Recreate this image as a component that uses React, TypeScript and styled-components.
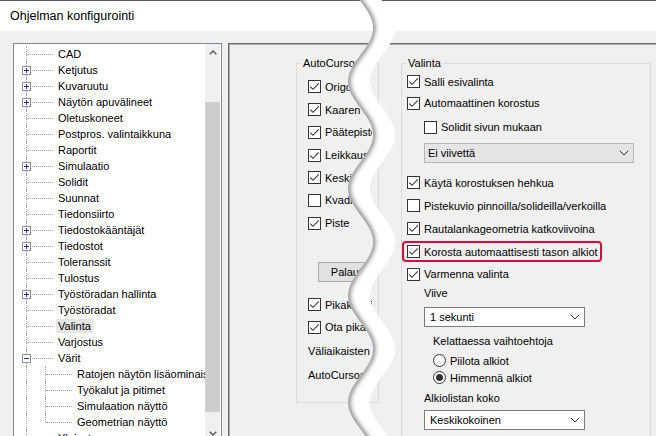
import React from 'react'
import styled, { createGlobalStyle } from 'styled-components'

const GlobalStyle = createGlobalStyle`
    html, body {
        margin: 0;
        padding: 0;
        background: #f0f0f0;
    }
    body {
        font-family: "Liberation Sans", Arial, sans-serif;
        font-size: 11px;
        color: #000;
    }
`

const Window = styled.div`
    position: relative;
    width: 656px;
    height: 436px;
    overflow: hidden;
    background: #f0f0f0;
`

const TitleBar = styled.div`
    height: 30px;
    border-top: 1px solid #5a5a5a;
    background: #fff;
    display: flex;
    align-items: center;
    padding-left: 10px;
    font-size: 12.5px;
`

const Body = styled.div`
    display: flex;
    align-items: flex-start;
    gap: 6px;
    padding: 12px 0 0 13px;
`

const TreeBox = styled.div`
    flex: none;
    width: 209px;
    height: 400px;
    box-sizing: border-box;
    border: 1px solid #828790;
    background: #fff;
    display: flex;
    padding-right: 1px;
`

const TreeList = styled.div`
    flex: 1;
    overflow: hidden;
    padding: 2px 0 0 12px;
`

const Row = styled.div`
    display: flex;
    align-items: center;
    height: 16px;
    white-space: nowrap;
`

const Guide = styled.span`
    flex: none;
    width: 19px;
    align-self: stretch;
    box-sizing: border-box;
    border-left: 1px dotted #a0a0a0;
`

const Branch = styled.span<{ $last?: boolean }>`
    position: relative;
    flex: none;
    width: 32px;
    align-self: stretch;
    &::before {
        content: '';
        position: absolute;
        left: 0;
        top: 0;
        height: ${p => (p.$last ? '8px' : '100%')};
        border-left: 1px dotted #a0a0a0;
    }
    &::after {
        content: '';
        position: absolute;
        left: 1px;
        top: 8px;
        width: 26px;
        border-top: 1px dotted #a0a0a0;
    }
`

const Expander = styled.span`
    position: absolute;
    z-index: 1;
    left: -4px;
    top: 4px;
    width: 9px;
    height: 9px;
    box-sizing: border-box;
    border: 1px solid #919191;
    background: #fff;
    display: flex;
`

const NodeLabel = styled.span<{ $selected?: boolean }>`
    padding: 0 2px;
    margin-left: -2px;
    line-height: 14px;
    background: ${p => (p.$selected ? '#e6e6e6' : 'transparent')};
`

const Scrollbar = styled.div`
    flex: none;
    width: 15px;
    background: #f0f0f0;
    display: flex;
    flex-direction: column;
`

const ScrollArrow = styled.div`
    height: 17px;
    display: flex;
    align-items: center;
    justify-content: center;
`

const ScrollTrack = styled.div`
    flex: 1;
`

const Thumb = styled.div`
    margin-top: 41px;
    height: 310px;
    background: #cdcdcd;
`

const Panel = styled.div`
    flex: none;
    width: 440px;
    height: 400px;
    box-sizing: border-box;
    border: 1px solid #6e6e6e;
    box-shadow: inset 1px 1px 0 #a8a8a8;
    display: flex;
    align-items: flex-start;
    gap: 22px;
    padding: 19px 0 0 67px;
`

const Group = styled.div<{ $width: number }>`
    flex: none;
    width: ${p => p.$width}px;
    box-sizing: border-box;
    border: 1px solid #dcdcdc;
`

const GroupTitle = styled.div`
    width: fit-content;
    margin: -8px 0 0 4px;
    padding: 0 2px;
    line-height: 14px;
    background: #f0f0f0;
`

const GroupBody = styled.div<{ $pad: string; $clip?: number }>`
    overflow: hidden;
    padding: ${p => p.$pad};
    margin-right: ${p => p.$clip ?? 0}px;
    display: flex;
    flex-direction: column;
    white-space: nowrap;
`

const CheckRow = styled.div<{ $h?: number; $indent?: number; $mt?: number }>`
    flex: none;
    display: flex;
    align-items: center;
    gap: 4px;
    height: ${p => p.$h ?? 23}px;
    padding-left: ${p => p.$indent ?? 0}px;
    margin-top: ${p => p.$mt ?? 0}px;
`

const Highlight = styled.div`
    flex: none;
    display: flex;
    align-items: center;
    gap: 4px;
    width: fit-content;
    height: 21px;
    box-sizing: border-box;
    margin: 1px 0 1px -5px;
    padding: 0 2px 0 3px;
    border: 2px solid #d0103a;
    border-radius: 4px;
`

const Box = styled.span`
    flex: none;
    width: 13px;
    height: 13px;
    box-sizing: border-box;
    border: 1px solid #333;
    background: #fff;
    display: flex;
    align-items: center;
    justify-content: center;
`

const RadioCircle = styled.span`
    flex: none;
    width: 13px;
    height: 13px;
    box-sizing: border-box;
    border: 1px solid #333;
    border-radius: 50%;
    background: #fff;
    display: flex;
    align-items: center;
    justify-content: center;
`

const RadioDot = styled.span`
    width: 7px;
    height: 7px;
    border-radius: 50%;
    background: #333;
`

const TextRow = styled.div<{ $h?: number; $indent?: number; $mt?: number }>`
    flex: none;
    display: flex;
    align-items: center;
    height: ${p => p.$h ?? 16}px;
    padding-left: ${p => p.$indent ?? 0}px;
    margin-top: ${p => p.$mt ?? 0}px;
`

const Select = styled.div<{ $width: number; $disabled?: boolean; $mt?: number }>`
    flex: none;
    width: ${p => p.$width}px;
    height: 20px;
    box-sizing: border-box;
    margin: ${p => p.$mt ?? 0}px 0 0 17px;
    border: 1px solid ${p => (p.$disabled ? '#b5b5b5' : '#7a7a7a')};
    background: ${p => (p.$disabled ? '#e5e5e5' : '#fff')};
    display: flex;
    align-items: center;
    justify-content: space-between;
    padding: 0 4px 0 ${p => (p.$disabled ? 3 : 5)}px;
`

const Button = styled.div`
    flex: none;
    width: 110px;
    height: 20px;
    box-sizing: border-box;
    margin: 28px 0 0 10px;
    border: 1px solid #adadad;
    background: #e1e1e1;
    display: flex;
    align-items: center;
    justify-content: center;
`

const WaveLayer = styled.svg`
    position: absolute;
    left: 0;
    top: 0;
    pointer-events: none;
    z-index: 5;
`

const Check = ({ checked }: { checked: boolean }) => (
    <Box>
        {checked && (
            <svg width="11" height="11" viewBox="0 0 11 11">
                <path d="M1.3 5.6 L4 8.3 L9.8 2.4" fill="none" stroke="#333" strokeWidth="1.1" />
            </svg>
        )}
    </Box>
)

const Radio = ({ checked }: { checked: boolean }) => (
    <RadioCircle>{checked && <RadioDot />}</RadioCircle>
)

const Chevron = () => (
    <svg width="10" height="6" viewBox="0 0 10 6">
        <polyline points="0.8,0.8 5,5 9.2,0.8" fill="none" stroke="#333" strokeWidth="1" />
    </svg>
)

const ExpandIcon = ({ open }: { open: boolean }) => (
    <svg width="7" height="7" viewBox="0 0 7 7">
        <line x1="1" y1="3.5" x2="6" y2="3.5" stroke="#1e3f8f" strokeWidth="1" />
        {!open && <line x1="3.5" y1="1" x2="3.5" y2="6" stroke="#1e3f8f" strokeWidth="1" />}
    </svg>
)

type Node = { label: string; exp?: '+' | '-'; level?: number; last?: boolean; selected?: boolean }

const tree: Node[] = [
    { label: 'CAD' },
    { label: 'Ketjutus', exp: '+' },
    { label: 'Kuvaruutu', exp: '+' },
    { label: 'Näytön apuvälineet', exp: '+' },
    { label: 'Oletuskoneet' },
    { label: 'Postpros. valintaikkuna' },
    { label: 'Raportit' },
    { label: 'Simulaatio', exp: '+' },
    { label: 'Solidit' },
    { label: 'Suunnat' },
    { label: 'Tiedonsiirto' },
    { label: 'Tiedostokääntäjät', exp: '+' },
    { label: 'Tiedostot', exp: '+' },
    { label: 'Toleranssit' },
    { label: 'Tulostus' },
    { label: 'Työstöradan hallinta', exp: '+' },
    { label: 'Työstöradat' },
    { label: 'Valinta', selected: true },
    { label: 'Varjostus' },
    { label: 'Värit', exp: '-' },
    { label: 'Ratojen näytön lisäominaisuudet', level: 2 },
    { label: 'Työkalut ja pitimet', level: 2 },
    { label: 'Simulaation näyttö', level: 2 },
    { label: 'Geometrian näyttö', level: 2, last: true },
    { label: 'Yleiset' },
]

const autoCursor: [string, boolean][] = [
    ['Origo', true],
    ['Kaaren keskipiste', true],
    ['Päätepiste', true],
    ['Leikkauspiste', true],
    ['Keskinen', true],
    ['Kvadr.', false],
    ['Piste', true],
]

// torn-paper strip drawn over the middle of the dialog
const waveX = (y: number) => 360.5 + 12.5 * Math.cos((2 * Math.PI * (y - 28)) / 107)

const Wave = () => {
    const ys: number[] = []
    for (let y = -6; y <= 444; y += 2) ys.push(y)
    const left = ys.map(y => `${waveX(y).toFixed(2)},${y}`)
    const right = ys.slice().reverse().map(y => `${(waveX(y) + 22).toFixed(2)},${y}`)
    const band = `M${left.join(' L')} L${right.join(' L')} Z`
    const edge = `M${left.join(' L')}`
    return (
        <WaveLayer width="656" height="436" viewBox="0 0 656 436">
            <defs>
                <clipPath id="band">
                    <path d={band} />
                </clipPath>
                <filter id="soft" filterUnits="userSpaceOnUse" x="0" y="-20" width="656" height="480">
                    <feGaussianBlur stdDeviation="2.2" />
                </filter>
            </defs>
            <path d={band} fill="#fff" />
            <g clipPath="url(#band)">
                <path d={edge} fill="none" stroke="#8a8a8a" strokeWidth="5" filter="url(#soft)" />
            </g>
        </WaveLayer>
    )
}

const App = () => {
    return (
        <Window>
            <GlobalStyle />
            <TitleBar>Ohjelman konfigurointi</TitleBar>
            <Body>
                <TreeBox>
                    <TreeList>
                        {tree.map(n => (
                            <Row key={n.label}>
                                {n.level === 2 && <Guide />}
                                <Branch $last={n.last}>
                                    {n.exp && (
                                        <Expander>
                                            <ExpandIcon open={n.exp === '-'} />
                                        </Expander>
                                    )}
                                </Branch>
                                <NodeLabel $selected={n.selected}>{n.label}</NodeLabel>
                            </Row>
                        ))}
                    </TreeList>
                    <Scrollbar>
                        <ScrollArrow>
                            <svg width="8" height="5" viewBox="0 0 8 5">
                                <polyline points="0.7,4.3 4,1 7.3,4.3" fill="none" stroke="#606060" strokeWidth="1.5" />
                            </svg>
                        </ScrollArrow>
                        <ScrollTrack>
                            <Thumb />
                        </ScrollTrack>
                        <ScrollArrow>
                            <svg width="8" height="5" viewBox="0 0 8 5">
                                <polyline points="0.7,0.7 4,4 7.3,0.7" fill="none" stroke="#606060" strokeWidth="1.5" />
                            </svg>
                        </ScrollArrow>
                    </Scrollbar>
                </TreeBox>
                <Panel>
                    <Group $width={83}>
                        <GroupTitle>AutoCursor</GroupTitle>
                        <GroupBody $pad="5.6px 0 15px 11px" $clip={6}>
                            {autoCursor.map(([label, on]) => (
                                <CheckRow key={label} $h={22.7}>
                                    <Check checked={on} />
                                    {label}
                                </CheckRow>
                            ))}
                            <Button>Palauta oletukset</Button>
                            <CheckRow $h={22.7} $mt={11}>
                                <Check checked />
                                Pikakohdistus
                            </CheckRow>
                            <CheckRow $h={22.7}>
                                <Check checked />
                                Ota pikakohdistus käyttöön
                            </CheckRow>
                            <TextRow $h={24}>Väliaikaisten kohteiden väri</TextRow>
                            <TextRow $h={24}>AutoCursor-väri</TextRow>
                        </GroupBody>
                    </Group>
                    <Group $width={250}>
                        <GroupTitle>Valinta</GroupTitle>
                        <GroupBody $pad="1px 0 20px 5px">
                            <CheckRow $h={21}>
                                <Check checked />
                                Salli esivalinta
                            </CheckRow>
                            <CheckRow $h={22}>
                                <Check checked />
                                Automaattinen korostus
                            </CheckRow>
                            <CheckRow $h={26} $indent={17}>
                                <Check checked={false} />
                                Solidit sivun mukaan
                            </CheckRow>
                            <Select $width={210} $disabled $mt={3}>
                                <span>Ei viivettä</span>
                                <Chevron />
                            </Select>
                            <CheckRow $mt={8}>
                                <Check checked />
                                Käytä korostuksen hehkua
                            </CheckRow>
                            <CheckRow>
                                <Check checked={false} />
                                Pistekuvio pinnoilla/solideilla/verkoilla
                            </CheckRow>
                            <CheckRow>
                                <Check checked />
                                Rautalankageometria katkoviivoina
                            </CheckRow>
                            <Highlight>
                                <Check checked />
                                Korosta automaattisesti tason alkiot
                            </Highlight>
                            <CheckRow $h={22}>
                                <Check checked />
                                Varmenna valinta
                            </CheckRow>
                            <TextRow $indent={17}>Viive</TextRow>
                            <Select $width={161} $mt={6}>
                                <span>1 sekunti</span>
                                <Chevron />
                            </Select>
                            <TextRow $indent={26} $mt={6}>Kelattaessa vaihtoehtoja</TextRow>
                            <CheckRow $h={17} $indent={26} $mt={3}>
                                <Radio checked={false} />
                                Piilota alkiot
                            </CheckRow>
                            <CheckRow $h={17} $indent={26}>
                                <Radio checked />
                                Himmennä alkiot
                            </CheckRow>
                            <TextRow $indent={17} $mt={4}>Alkiolistan koko</TextRow>
                            <Select $width={161} $mt={4}>
                                <span>Keskikokoinen</span>
                                <Chevron />
                            </Select>
                        </GroupBody>
                    </Group>
                </Panel>
            </Body>
            <Wave />
        </Window>
    )
}

export default App
